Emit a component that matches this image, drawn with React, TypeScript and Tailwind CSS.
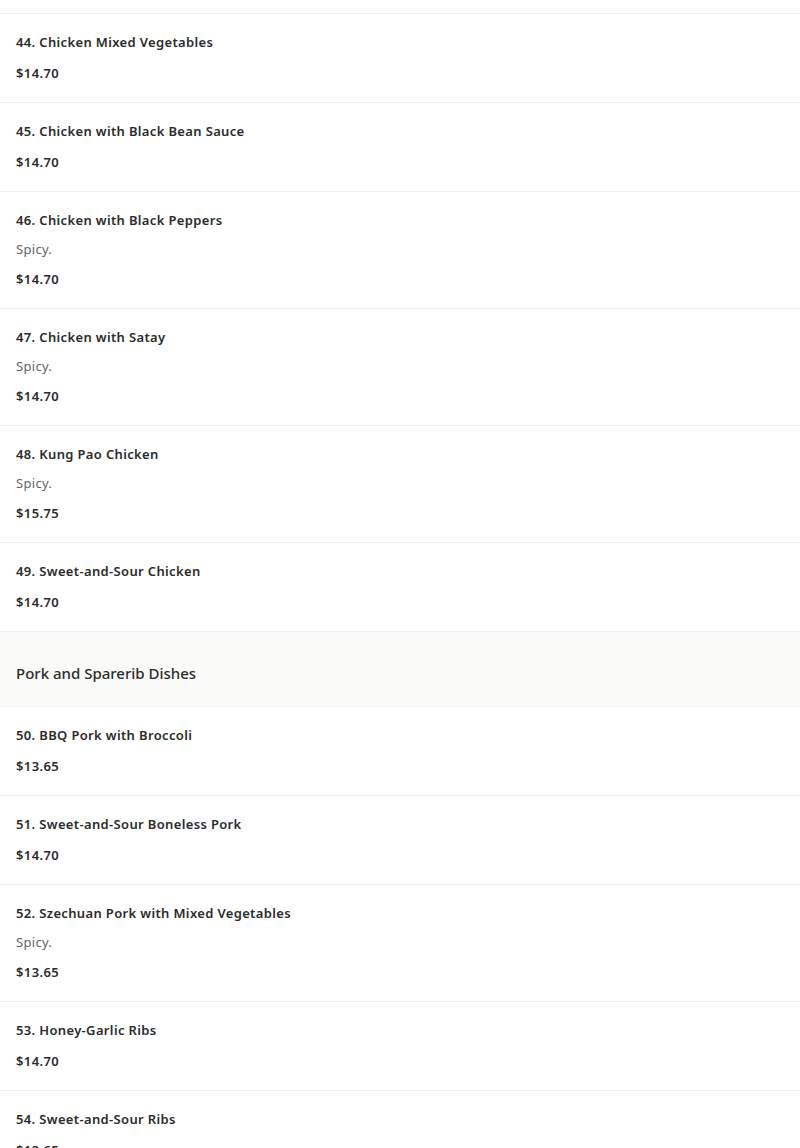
import React from "react";

type Item = { name: string; price: string; desc?: string };
type Row = { kind: "item"; item: Item } | { kind: "section"; title: string };

const rows: Row[] = [
  { kind: "item", item: { name: "44. Chicken Mixed Vegetables", price: "$14.70" } },
  { kind: "item", item: { name: "45. Chicken with Black Bean Sauce", price: "$14.70" } },
  { kind: "item", item: { name: "46. Chicken with Black Peppers", desc: "Spicy.", price: "$14.70" } },
  { kind: "item", item: { name: "47. Chicken with Satay", desc: "Spicy.", price: "$14.70" } },
  { kind: "item", item: { name: "48. Kung Pao Chicken", desc: "Spicy.", price: "$15.75" } },
  { kind: "item", item: { name: "49. Sweet-and-Sour Chicken", price: "$14.70" } },
  { kind: "section", title: "Pork and Sparerib Dishes" },
  { kind: "item", item: { name: "50. BBQ Pork with Broccoli", price: "$13.65" } },
  { kind: "item", item: { name: "51. Sweet-and-Sour Boneless Pork", price: "$14.70" } },
  { kind: "item", item: { name: "52. Szechuan Pork with Mixed Vegetables", desc: "Spicy.", price: "$13.65" } },
  { kind: "item", item: { name: "53. Honey-Garlic Ribs", price: "$14.70" } },
  { kind: "item", item: { name: "54. Sweet-and-Sour Ribs", price: "$13.65" } },
];

function MenuItem({ item }: { item: Item }) {
  return (
    <div className="border-t border-[#f1f1ef] px-4 pt-[18px] pb-[19px]">
      <div className="text-[13px] leading-5 font-semibold tracking-[0.35px] text-[#2b2b2b]">{item.name}</div>
      {item.desc && (
        <div className="mt-[9px] text-[13px] leading-5 tracking-[0.3px] text-[#5f6368]">{item.desc}</div>
      )}
      <div className={`${item.desc ? "mt-[10px]" : "mt-[11px]"} text-[13px] leading-5 font-semibold tracking-[0.4px] text-[#2b2b2b]`}>
        {item.price}
      </div>
    </div>
  );
}

export default function App() {
  return (
    <div className="w-[800px] h-[1148px] overflow-hidden bg-white" style={{ fontFamily: '"Noto Sans", "Open Sans", sans-serif' }}>
      <div className="h-[13px]" />
      {rows.map((r, i) =>
        r.kind === "item" ? (
          <MenuItem key={i} item={r.item} />
        ) : (
          <div key={i} className="border-t border-[#f1f1ef] bg-[#fafaf8] px-4 pt-[30px] pb-[22px]">
            <div className="text-[15px] leading-[22px] font-medium text-[#2b2b2b]">{r.title}</div>
          </div>
        )
      )}
    </div>
  );
}
